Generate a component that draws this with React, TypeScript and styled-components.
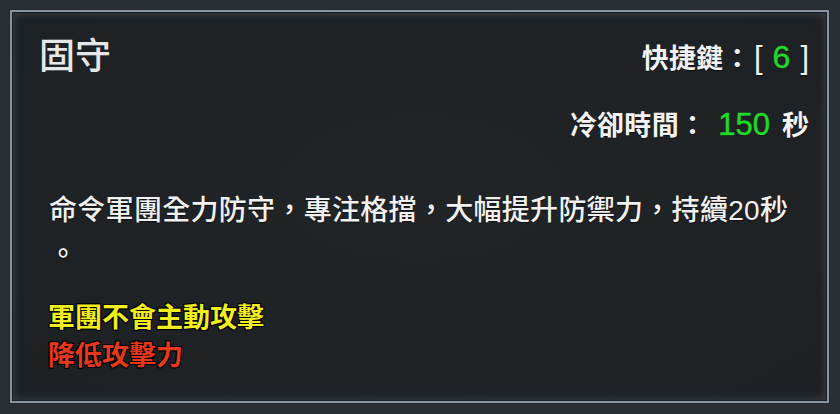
import React from "react";
import styled, { createGlobalStyle } from "styled-components";

const Global = createGlobalStyle`
  html, body { margin: 0; padding: 0; background: #2a2f36; }
  body { width: 840px; height: 414px; overflow: hidden; }
`;

const FONT = `"Liberation Sans", "Noto Sans CJK TC", sans-serif`;

const Page = styled.div`
  width: 840px;
  height: 414px;
  box-sizing: border-box;
  padding: 10px 11px 11px 10px;
  background: #2a2f36;
  font-family: ${FONT};
`;

const Frame = styled.div`
  width: 100%;
  height: 100%;
  box-sizing: border-box;
  border: 2px solid #8695a1;
  background: radial-gradient(ellipse at 50% 45%, #222528 0%, #1f2225 70%, #1e2124 100%);
  box-shadow: inset 0 0 0 1px #1b1e22, inset 0 0 7px 3px rgba(120, 138, 152, 0.22),
    0 0 0 1px #23282e;
  padding: 24px 18px 0 27px;
  display: flex;
  flex-direction: column;
`;

const TopRow = styled.div`
  display: flex;
  justify-content: space-between;
  align-items: flex-start;
`;

const Title = styled.div`
  font-size: 36px;
  line-height: 42px;
  color: #e6e8e8;
  font-weight: 500;
`;

const InfoLine = styled.div<{ $top?: number }>`
  display: flex;
  align-items: baseline;
  justify-content: flex-end;
  font-size: 27px;
  line-height: 34px;
  color: #f2f2f2;
  font-weight: 700;
  margin-top: ${(p) => p.$top ?? 0}px;
  text-shadow: 0 1px 1px rgba(0, 0, 0, 0.6);
`;

const Label = styled.span`
  letter-spacing: 0.3px;
`;

const Green = styled.span<{ $size?: number; $gap?: number }>`
  color: #22d82a;
  font-weight: 400;
  font-size: ${(p) => p.$size ?? 27}px;
  margin: 0 ${(p) => p.$gap ?? 0}px;
  -webkit-text-stroke: 0.5px #22d82a;
`;

const Bracket = styled.span<{ $left?: number }>`
  font-weight: 400;
  color: #f0f0f0;
  font-size: 31px;
  margin-left: ${(p) => p.$left ?? 0}px;
`;

const Desc = styled.div`
  margin-top: 46px;
  padding-left: 10px;
  width: 750px;
  font-size: 28px;
  line-height: 44px;
  color: #f1f1f1;
  font-weight: 500;
  letter-spacing: 0.3px;
  line-break: anywhere;
  text-shadow: 0 1px 1px rgba(0, 0, 0, 0.6);
`;

const Notes = styled.div`
  margin-top: 22px;
  padding-left: 9px;
  display: flex;
  flex-direction: column;
`;

const Note = styled.div<{ $color: string }>`
  font-size: 27px;
  line-height: 38px;
  font-weight: 700;
  color: ${(p) => p.$color};
  text-shadow: 1px 1px 0 #000, -1px -1px 0 #000, 1px -1px 0 #000, -1px 1px 0 #000,
    0 0 2px #000;
`;

export default function App() {
  return (
    <>
      <Global />
      <Page>
        <Frame>
          <TopRow>
            <Title>固守</Title>
            <InfoLine $top={4}>
              <Label>快捷鍵：</Label>
              <Bracket $left={3}>[</Bracket>
              <Green $size={32} $gap={10}>6</Green>
              <Bracket>]</Bracket>
            </InfoLine>
          </TopRow>
          <InfoLine $top={30}>
            <Label>冷卻時間：</Label>
            <Green $size={31} $gap={12}>150</Green>秒
          </InfoLine>
          <Desc>命令軍團全力防守，專注格擋，大幅提升防禦力，持續20秒。</Desc>
          <Notes>
            <Note $color="#f2ee1e">軍團不會主動攻擊</Note>
            <Note $color="#e6381c">降低攻擊力</Note>
          </Notes>
        </Frame>
      </Page>
    </>
  );
}
